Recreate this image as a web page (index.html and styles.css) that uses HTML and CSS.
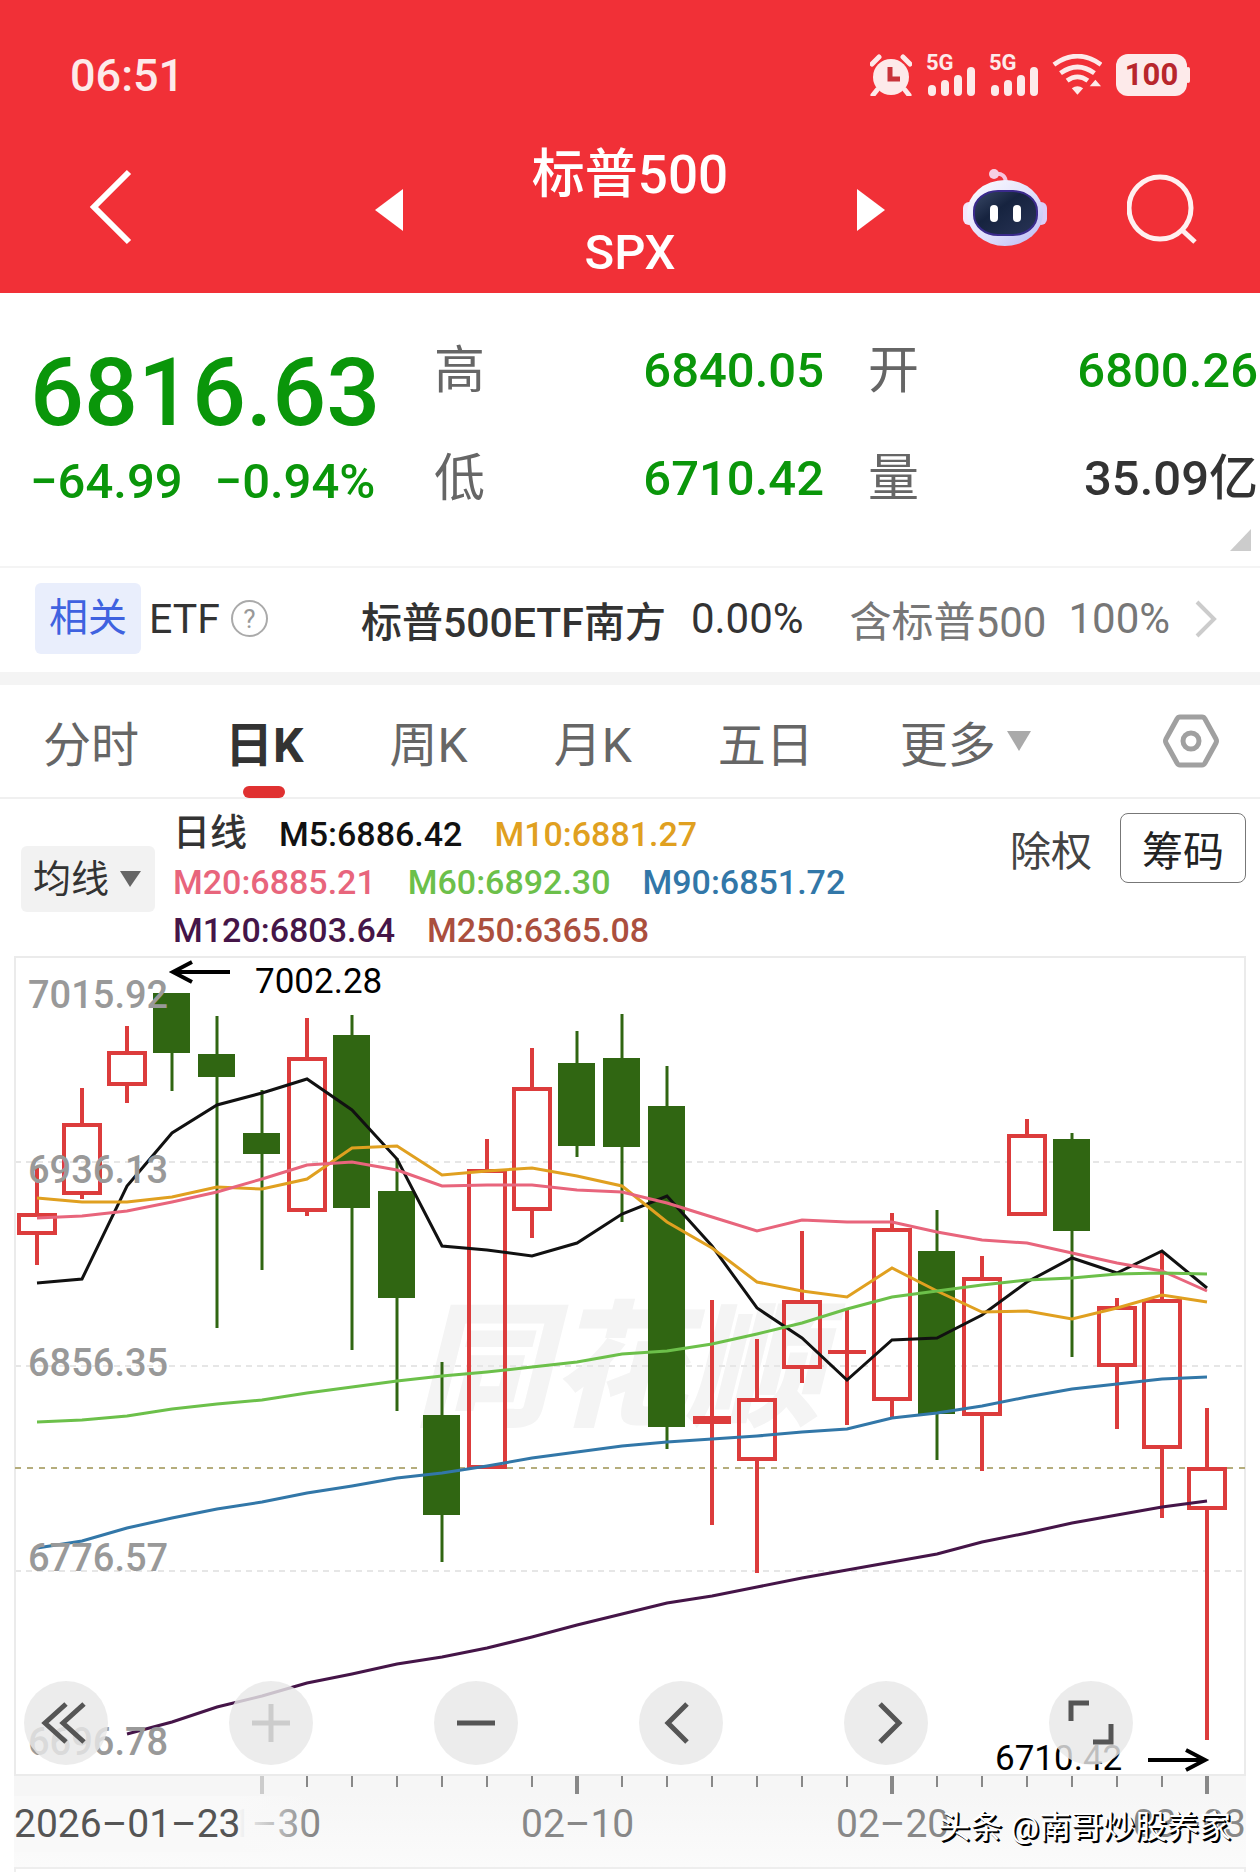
FILE: index.html
```html
<!DOCTYPE html>
<html lang="zh-CN">
<head>
    <meta charset="UTF-8">
    <meta name="viewport" content="width=device-width, initial-scale=1.0">
    <title>标普500 SPX</title>
    <link rel="stylesheet" href="styles.css">
</head>
<body>
    <header class="header">
        <div class="status-bar">
            <span class="clock">06:51</span>
            <div class="status-icons">
                <svg width="42" height="42" viewBox="0 0 42 42">
                    <circle cx="21" cy="23" r="18" fill="#fdeaea"/>
                    <path d="M2 10L9 3M40 10L33 3M7 36L3 41M35 36L39 41" stroke="#fdeaea" stroke-width="5" stroke-linecap="round"/>
                    <path d="M20 13V25H30" fill="none" stroke="#c8333a" stroke-width="5"/>
                </svg>
                <div class="signal">
                    <span>5G</span>
                    <svg width="49" height="30" viewBox="0 0 49 30" stroke="#fdeaea" stroke-width="8" stroke-linecap="round"><path d="M6 22V25M19 17V25M32 12V25M45 4V25"/></svg>
                </div>
                <div class="signal">
                    <span>5G</span>
                    <svg width="49" height="30" viewBox="0 0 49 30" stroke="#fdeaea" stroke-width="8" stroke-linecap="round"><path d="M6 22V25M19 17V25M32 12V25M45 4V25"/></svg>
                </div>
                <svg width="50" height="42" viewBox="0 0 53 44">
                    <path d="M2 11Q27 -7 52 11M9 20Q27 7 45 20M16 28Q27 20 38 28" fill="none" stroke="#fdeaea" stroke-width="5"/>
                    <path d="M21 36Q27 32 33 36L27 43ZM40 34L46 27L52 34Z" fill="#fdeaea"/>
                </svg>
                <span class="battery">100</span>
            </div>
        </div>
        <nav class="nav">
            <button class="icon-button" aria-label="返回">
                <svg width="44" height="82" viewBox="0 0 44 82"><path d="M40 3L5 38L40 73" fill="none" stroke="#fff" stroke-width="6"/></svg>
            </button>
            <div class="title-group">
                <button class="icon-button" aria-label="上一个">
                    <svg width="28" height="42" viewBox="0 0 28 42"><path d="M28 0V42L0 21Z" fill="#fff"/></svg>
                </button>
                <h1 class="title">标普500<span>SPX</span></h1>
                <button class="icon-button" aria-label="下一个">
                    <svg width="28" height="42" viewBox="0 0 28 42"><path d="M0 0V42L28 21Z" fill="#fff"/></svg>
                </button>
            </div>
            <div class="nav-right">
                <button class="icon-button" aria-label="智能助手">
                    <svg width="84" height="84" viewBox="0 0 84 84">
                        <defs>
                            <linearGradient id="shell" x1="0" y1="0" x2="1" y2="1">
                                <stop offset="0" stop-color="#fff"/>
                                <stop offset="0.6" stop-color="#dcdcfb"/>
                                <stop offset="1" stop-color="#b9b7f3"/>
                            </linearGradient>
                            <linearGradient id="visor" x1="0" y1="0" x2="1" y2="1">
                                <stop offset="0" stop-color="#3b4a68"/>
                                <stop offset="0.4" stop-color="#16233f"/>
                                <stop offset="1" stop-color="#283456"/>
                            </linearGradient>
                        </defs>
                        <path d="M31 6Q43 4 43 16" fill="none" stroke="#f7c3dc" stroke-width="4"/>
                        <circle cx="31" cy="6" r="5" fill="#f6cfe4"/>
                        <rect x="0" y="34" width="12" height="23" rx="6" fill="#f4e6fb"/>
                        <rect x="72" y="34" width="12" height="23" rx="6" fill="#dccdf8"/>
                        <rect x="4" y="12" width="76" height="66" rx="38" ry="33" fill="url(#shell)"/>
                        <rect x="11" y="23" width="63" height="44" rx="24" ry="20" fill="url(#visor)" stroke="#3a2a8c" stroke-width="2"/>
                        <rect x="27" y="37" width="8" height="17" rx="4" fill="#fff"/>
                        <rect x="50" y="37" width="8" height="17" rx="4" fill="#fff"/>
                    </svg>
                </button>
                <button class="icon-button" aria-label="搜索">
                    <svg width="70" height="72" viewBox="0 0 70 72" fill="none" stroke="#fff0f0" stroke-width="5"><circle cx="33" cy="34" r="31"/><path d="M55 56L68 68"/></svg>
                </button>
            </div>
        </nav>
    </header>

    <section class="quote">
        <div class="price">
            <strong>6816.63</strong>
            <div class="change"><span>−64.99</span><span>−0.94%</span></div>
        </div>
        <dl class="stats">
            <div><dt>高</dt><dd>6840.05</dd></div>
            <div><dt>低</dt><dd>6710.42</dd></div>
        </dl>
        <dl class="stats">
            <div><dt>开</dt><dd>6800.26</dd></div>
            <div><dt>量</dt><dd class="plain">35.09亿</dd></div>
        </dl>
        <span class="corner"></span>
    </section>

    <section class="etf">
        <span class="tag">相关</span>
        <span class="etf-label">ETF</span>
        <button class="help" aria-label="说明">?</button>
        <a href="#" class="etf-name">标普500ETF南方</a>
        <span class="etf-change">0.00%</span>
        <span class="etf-hold">含标普500</span>
        <span class="etf-ratio">100%</span>
        <svg width="24" height="40" viewBox="0 0 24 40"><path d="M3 3L20 20L3 37" fill="none" stroke="#ccc" stroke-width="4"/></svg>
    </section>

    <nav class="tabs">
        <button class="tab">分时</button>
        <button class="tab active">日K</button>
        <button class="tab">周K</button>
        <button class="tab">月K</button>
        <button class="tab">五日</button>
        <button class="tab">更多<svg width="26" height="22" viewBox="0 0 26 22"><path d="M1 1H25L13 21Z" fill="#aaa"/></svg></button>
        <button class="icon-button settings" aria-label="设置">
            <svg width="58" height="56" viewBox="0 0 58 56" fill="none" stroke="#a0a0a0" stroke-width="5"><path d="M18 4H40Q42 4 43 6L54 26Q55 28 54 30L43 50Q42 52 40 52H18Q16 52 15 50L4 30Q3 28 4 26L15 6Q16 4 18 4Z" stroke-linejoin="round"/><circle cx="29" cy="28" r="8"/></svg>
        </button>
    </nav>

    <section class="ma-bar">
        <select class="ma-select" aria-label="指标">
            <option>均线</option>
        </select>
        <div class="legend">
            <div class="legend-row"><b class="ma-title">日线</b><span class="m5">M5:6886.42</span><span class="m10">M10:6881.27</span></div>
            <div class="legend-row"><span class="m20">M20:6885.21</span><span class="m60">M60:6892.30</span><span class="m90">M90:6851.72</span></div>
            <div class="legend-row"><span class="m120">M120:6803.64</span><span class="m250">M250:6365.08</span></div>
        </div>
        <div class="ma-actions">
            <button class="text-button">除权</button>
            <button class="box-button">筹码</button>
        </div>
    </section>

    <section class="chart">
        <svg id="kline" viewBox="0 956 1260 839"></svg>
        <div class="controls">
            <button aria-label="最早"><svg viewBox="0 0 84 84"><path d="M42 23L21 42L42 61M60 23L39 42L60 61"/></svg></button>
            <button class="disabled" aria-label="放大"><svg viewBox="0 0 84 84"><path d="M42 23V61M23 42H61"/></svg></button>
            <button aria-label="缩小"><svg viewBox="0 0 84 84"><path d="M23 42H61"/></svg></button>
            <button aria-label="左移"><svg viewBox="0 0 84 84"><path d="M48 23L29 42L48 61"/></svg></button>
            <button aria-label="右移"><svg viewBox="0 0 84 84"><path d="M36 23L55 42L36 61"/></svg></button>
            <button aria-label="全屏"><svg viewBox="0 0 84 84"><path d="M22 40V22H40M62 43V61H44"/></svg></button>
        </div>
        <div class="dates">
            <span class="date-now">2026–01–23</span>
            <span class="date">01–30</span>
            <span class="date">02–10</span>
            <span class="date">02–20</span>
            <span class="date">03–03</span>
            <span class="author">头条 @南哥炒股养家</span>
        </div>
    </section>
    <div class="next-panel"></div>

    <script src="chart.js"></script>
</body>
</html>
```
FILE: styles.css
```css
* {
    box-sizing: border-box;
}
body {
    margin: 0;
    background-color: #fff;
    color: #333;
    font-family: Roboto, "Noto Sans CJK SC", sans-serif;
}
button, select {
    font-family: inherit;
    border: none;
    background: none;
    padding: 0;
    color: inherit;
}
svg {
    display: block;
}
.icon-button {
    cursor: pointer;
}

/* 顶部 */
.header {
    background-color: #f13037;
    color: #fff;
}
.status-bar {
    display: flex;
    justify-content: space-between;
    align-items: center;
    height: 126px;
    padding: 24px 73px 0 70px;
    color: #fdeaea;
}
.clock {
    font-size: 45px;
    font-weight: 500;
}
.status-icons {
    display: flex;
    align-items: center;
    gap: 14px;
}
.signal {
    position: relative;
    width: 49px;
    height: 43px;
    padding-top: 13px;
}
.signal span {
    position: absolute;
    left: 0;
    top: 0;
    font-size: 22px;
    line-height: 18px;
    font-weight: 700;
}
.battery {
    position: relative;
    width: 71px;
    height: 42px;
    line-height: 42px;
    border-radius: 12px;
    background-color: #fdeaea;
    color: #b8262c;
    font-size: 31px;
    font-weight: 700;
    text-align: center;
}
.battery::after {
    content: "";
    position: absolute;
    right: -3px;
    top: 13px;
    width: 4px;
    height: 16px;
    border-radius: 2px;
    background-color: #fdeaea;
}
.nav {
    display: grid;
    grid-template-columns: 1fr 510px 1fr;
    align-items: center;
    justify-items: start;
    height: 167px;
}
.nav > .icon-button {
    margin-left: 89px;
}
.title-group {
    display: flex;
    align-items: center;
    justify-content: space-between;
    width: 100%;
}
.title {
    margin: 0;
    padding-top: 8px;
    font-size: 53px;
    line-height: 78px;
    font-weight: 500;
    text-align: center;
}
.title span {
    display: block;
    font-size: 49px;
}
.nav-right {
    display: flex;
    align-items: center;
    justify-self: end;
    gap: 80px;
    padding-right: 63px;
}

/* 报价 */
.quote {
    position: relative;
    display: flex;
    height: 273px;
    padding: 24px 2px 0 30px;
}
.price {
    width: 404px;
    color: #0a960a;
    white-space: nowrap;
}
.price strong {
    display: block;
    padding-top: 20px;
    font-size: 95px;
    line-height: 112px;
    font-weight: 500;
}
.change {
    display: flex;
    gap: 32px;
    font-size: 49px;
    line-height: 66px;
    font-weight: 500;
}
.stats {
    flex: 1;
    margin: 0;
}
.stats + .stats {
    margin-left: 44px;
}
.stats div {
    display: flex;
    justify-content: space-between;
    height: 108px;
    line-height: 108px;
}
.stats dt {
    font-size: 51px;
    color: #666;
}
.stats dd {
    margin: 0;
    font-size: 49px;
    font-weight: 500;
    color: #0a960a;
}
.stats dd.plain {
    color: #333;
}
.corner {
    position: absolute;
    right: 9px;
    bottom: 15px;
    border-left: 21px solid transparent;
    border-bottom: 22px solid #ccc;
}

/* ETF */
.etf {
    display: flex;
    align-items: center;
    height: 119px;
    padding: 0 42px 3px 35px;
    border-top: 2px solid #f4f4f4;
    border-bottom: 13px solid #f4f4f4;
    font-size: 42px;
    white-space: nowrap;
}
.tag {
    padding: 0 14px;
    line-height: 71px;
    font-size: 39px;
    color: #3f62e0;
    background-color: #e9eefc;
    border-radius: 6px;
}
.etf-label {
    margin-left: 8px;
    font-size: 41px;
}
.help {
    width: 37px;
    height: 37px;
    margin-left: 11px;
    border: 2px solid #aaa;
    border-radius: 50%;
    font-size: 26px;
    line-height: 32px;
    color: #999;
}
.etf-name {
    margin-left: auto;
    font-size: 41px;
    font-weight: 500;
    color: #333;
    text-decoration: none;
}
.etf-change {
    margin-left: 25px;
}
.etf-hold {
    margin-left: 46px;
    color: #777;
}
.etf-ratio {
    margin: 0 24px 0 22px;
    color: #777;
}

/* 周期切换 */
.tabs {
    display: flex;
    align-items: center;
    gap: 86px;
    height: 114px;
    padding: 0 40px 0 43px;
    border-bottom: 2px solid #f0f0f0;
}
.tab {
    position: relative;
    display: flex;
    align-items: center;
    gap: 10px;
    height: 112px;
    font-size: 48px;
    color: #666;
    white-space: nowrap;
}
.tab.active {
    color: #333;
    font-weight: 700;
}
.tab.active::after {
    content: "";
    position: absolute;
    left: 50%;
    bottom: -1px;
    width: 42px;
    height: 12px;
    margin-left: -21px;
    border-radius: 6px;
    background-color: #e03131;
}
.settings {
    margin-left: auto;
}

/* 均线 */
.ma-bar {
    display: flex;
    align-items: flex-start;
    padding: 11px 14px 2px 21px;
}
.ma-select {
    appearance: none;
    width: 134px;
    height: 66px;
    margin-top: 36px;
    padding-left: 12px;
    border-radius: 6px;
    background: #f2f2f2 url("data:image/svg+xml,%3Csvg xmlns='http://www.w3.org/2000/svg' width='21' height='16'%3E%3Cpath d='M0 0H21L10 16Z' fill='%23666'/%3E%3C/svg%3E") no-repeat right 14px center;
    font-size: 38px;
    color: #333;
}
.legend {
    flex: 1;
    padding-left: 18px;
}
.legend-row {
    display: flex;
    gap: 32px;
    height: 48px;
    line-height: 48px;
    font-size: 34px;
    font-weight: 500;
    white-space: nowrap;
}
.ma-title {
    font-size: 37px;
    font-weight: 500;
}
.m5 { color: #111; }
.m10 { color: #e0a020; }
.m20 { color: #e8657c; }
.m60 { color: #6cc04a; }
.m90 { color: #3277a8; }
.m120 { color: #451548; }
.m250 { color: #ab4f3e; }
.ma-actions {
    display: flex;
    align-items: center;
    gap: 28px;
    padding-top: 3px;
}
.text-button, .box-button {
    font-size: 41px;
    height: 70px;
    color: #444;
}
.box-button {
    width: 126px;
    border: 1px solid #777;
    border-radius: 8px;
    color: #222;
}

/* K线图 */
.chart {
    position: relative;
}
#kline {
    width: 100%;
    height: auto;
}
#kline text {
    font-family: Roboto, sans-serif;
}
.axis-label {
    font-size: 38px;
    font-weight: 500;
    fill: #999;
}
.mark-label {
    font-size: 35px;
    fill: #000;
}
#kline .brand {
    font-family: "Noto Sans CJK SC", sans-serif;
    font-size: 136px;
    font-weight: 900;
    font-style: italic;
    fill: #f4f4f4;
}
.controls {
    position: absolute;
    left: 0;
    right: 0;
    bottom: 102px;
    display: flex;
    justify-content: space-between;
    padding: 0 127px 0 24px;
}
.controls button {
    width: 84px;
    height: 84px;
    border-radius: 50%;
    background-color: rgba(232, 232, 232, 0.82);
    cursor: pointer;
}
.controls path {
    fill: none;
    stroke: #555;
    stroke-width: 5;
}
.controls .disabled path {
    stroke: #ccc;
}
.dates {
    position: relative;
    height: 72px;
    margin: 0 14px;
    background: linear-gradient(#f6f6f6, #fbfbfb);
    font-size: 39px;
    line-height: 56px;
    color: #888;
}
.date, .date-now, .author {
    position: absolute;
    top: 1px;
    white-space: nowrap;
}
.date:nth-child(2) { left: 194px; }
.date:nth-child(3) { left: 507px; }
.date:nth-child(4) { left: 822px; }
.date:nth-child(5) { right: 0; }
.date-now {
    z-index: 1;
    padding-right: 70px;
    color: #555;
    background: linear-gradient(to right, #f9f9f9 75%, rgba(249, 249, 249, 0));
}
.author {
    z-index: 2;
    right: 15px;
    top: 4px;
    font-size: 32px;
    color: #fff;
    text-shadow: 2px 2px 0 #000, 1px 1px 0 #000;
}
.next-panel {
    height: 5px;
    margin: 0 14px;
    border: 2px solid #eee;
    border-bottom: none;
}
```
FILE: chart.js
```js
// [最高, 实体上沿, 实体下沿, 最低, 是否上涨]
const candles = [
    [1167, 1213, 1235, 1265, 1], [1088, 1123, 1195, 1199, 1], [1026, 1051, 1086, 1103, 1],
    [993, 993, 1053, 1091, 0], [1016, 1054, 1077, 1328, 0], [1090, 1133, 1154, 1270, 0],
    [1018, 1057, 1212, 1216, 1], [1015, 1035, 1208, 1350, 0], [1158, 1191, 1298, 1411, 0],
    [1362, 1415, 1515, 1562, 0], [1139, 1169, 1469, 1469, 1], [1048, 1087, 1211, 1238, 1],
    [1031, 1063, 1146, 1157, 0], [1014, 1058, 1147, 1222, 0], [1066, 1106, 1427, 1449, 0],
    [1300, 1416, 1424, 1525, 1], [1339, 1398, 1461, 1573, 1], [1231, 1300, 1369, 1383, 1],
    [1308, 1350, 1354, 1425, 1], [1213, 1228, 1401, 1418, 1], [1210, 1251, 1414, 1460, 0],
    [1256, 1277, 1416, 1471, 1], [1119, 1134, 1216, 1216, 1], [1133, 1139, 1231, 1357, 0],
    [1298, 1306, 1367, 1429, 1], [1252, 1299, 1449, 1518, 1], [1408, 1467, 1510, 1740, 1]
];

const lines = [
    { color: '#111', start: 0, ys: [1283, 1279, 1186, 1133, 1105, 1093, 1079, 1110, 1159, 1246, 1250, 1256, 1243, 1214, 1196, 1246, 1308, 1338, 1380, 1340, 1338, 1315, 1282, 1258, 1273, 1251, 1288] },
    { color: '#e0a020', start: 0, ys: [1198, 1202, 1202, 1197, 1187, 1189, 1179, 1148, 1146, 1175, 1171, 1168, 1176, 1186, 1222, 1248, 1282, 1291, 1297, 1268, 1291, 1312, 1311, 1319, 1308, 1295, 1302] },
    { color: '#e8657c', start: 0, ys: [1218, 1216, 1211, 1202, 1192, 1179, 1165, 1162, 1170, 1186, 1185, 1185, 1190, 1192, 1203, 1217, 1231, 1220, 1222, 1222, 1232, 1240, 1243, 1253, 1263, 1271, 1291] },
    { color: '#6cc04a', start: 0, ys: [1422, 1420, 1416, 1409, 1404, 1400, 1393, 1387, 1381, 1376, 1372, 1367, 1362, 1354, 1351, 1344, 1334, 1323, 1309, 1297, 1291, 1285, 1280, 1278, 1274, 1273, 1274] },
    { color: '#3277a8', start: 0, ys: [1548, 1541, 1528, 1518, 1509, 1502, 1493, 1486, 1478, 1473, 1466, 1458, 1452, 1446, 1442, 1439, 1436, 1432, 1429, 1418, 1413, 1406, 1397, 1389, 1384, 1379, 1377] },
    { color: '#451548', start: 2, ys: [1734, 1722, 1707, 1696, 1683, 1674, 1664, 1657, 1648, 1637, 1625, 1614, 1603, 1596, 1587, 1578, 1570, 1562, 1554, 1542, 1533, 1523, 1515, 1507, 1501] }
];

const x = i => 37 + 45 * i;
const red = '#dc3c3c';
const green = '#306612';
let out = '';

// 坐标轴背景、边框、网格
out += '<rect x="14" y="1776" width="1232" height="19" fill="#f6f6f6"/>';
out += '<text class="brand" x="618" y="1415" text-anchor="middle">同花顺</text>';
[1162, 1366, 1571].forEach(y => {
    out += `<path d="M15 ${y}H1245" stroke="#e6e6e6" stroke-width="2" stroke-dasharray="6 5"/>`;
});
out += '<rect x="15" y="957" width="1230" height="818" fill="none" stroke="#ebebeb" stroke-width="2"/>';
out += '<path d="M15 1468H1245" stroke="#b5ad7c" stroke-width="2" stroke-dasharray="6 6"/>';

// 蜡烛
candles.forEach(([high, top, bottom, low, up], i) => {
    const cx = x(i);
    if (up) {
        out += `<path d="M${cx} ${high}V${top}M${cx} ${bottom}V${low}" stroke="${red}" stroke-width="4"/>`;
        out += bottom - top < 10
            ? `<rect x="${cx - 19}" y="${top}" width="38" height="${bottom - top}" fill="${red}"/><path d="M${cx} ${high}V${low}" stroke="${red}" stroke-width="4"/>`
            : `<rect x="${cx - 18}" y="${top + 2}" width="36" height="${bottom - top - 4}" fill="none" stroke="${red}" stroke-width="4"/>`;
    } else {
        out += `<path d="M${cx} ${high}V${low}" stroke="${green}" stroke-width="3"/>`;
        out += `<rect x="${cx - 19}" y="${top}" width="37" height="${bottom - top}" fill="${green}"/>`;
    }
});

// 均线
lines.forEach(line => {
    const points = line.ys.map((y, i) => `${x(i + line.start)},${y}`).join(' ');
    out += `<polyline points="${points}" fill="none" stroke="${line.color}" stroke-width="3"/>`;
});

// 价格
[['7015.92', 1008], ['6936.13', 1183], ['6856.35', 1376], ['6776.57', 1571], ['6696.78', 1755]].forEach(([t, y]) => {
    out += `<text class="axis-label" x="28" y="${y}">${t}</text>`;
});

// 最高、最低标记
out += '<path d="M230 972H173M192 962L173 972L192 982M1148 1760H1205M1186 1750L1205 1760L1186 1770" fill="none" stroke="#000" stroke-width="4"/>';
out += '<text class="mark-label" x="255" y="993">7002.28</text><text class="mark-label" x="995" y="1770">6710.42</text>';

// 刻度
for (let i = 5; i < candles.length; i++) {
    const major = (i - 5) % 7 === 0;
    out += `<path d="M${x(i)} 1776V${major ? 1794 : 1787}" stroke="${i === 5 ? '#ccc' : '#888'}" stroke-width="${major ? 4 : 2}"/>`;
}

document.getElementById('kline').innerHTML = out;
```
